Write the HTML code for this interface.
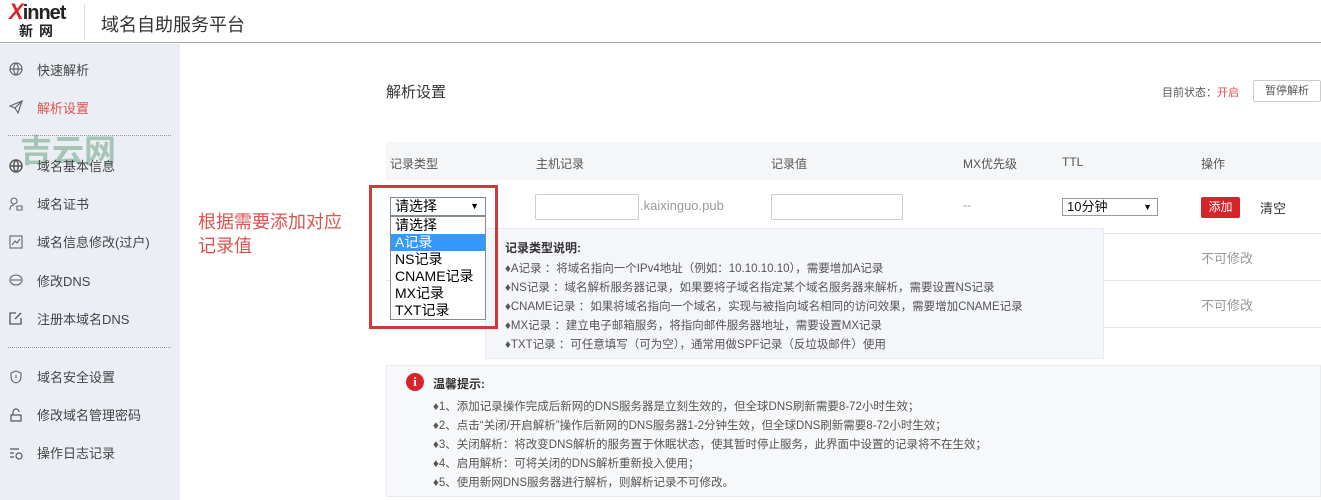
<!DOCTYPE html>
<html><head><meta charset="utf-8"><style>
*{margin:0;padding:0;box-sizing:border-box}
body{width:1321px;height:500px;overflow:hidden;background:#fff;font-family:"Liberation Sans","Noto Sans CJK SC",sans-serif;color:#333;position:relative}
.a{position:absolute;white-space:nowrap}
.side{position:absolute;left:0;top:44px;width:180px;height:456px;background:#eceef5}
.nav{position:absolute;left:37px;font-size:13px;color:#444}
.ic{position:absolute;left:9px;width:14px;height:14px}
.sep{position:absolute;left:8px;width:163px;border-top:1px dotted #999}
.th{font-size:12px;color:#555;top:155px}
.tip{font-size:11.5px;color:#555}
</style></head><body>
<div class="a" style="left:0;top:0;width:1321px;height:43px;border-bottom:1px solid #aaa;background:#fff"></div>
<div class="a" style="left:9px;top:-1px;font:bold 20px 'Liberation Sans',sans-serif;color:#222;letter-spacing:-1px"><span style="color:#d8262c;font-style:italic;font-size:22px">X</span>innet</div>
<div class="a" style="left:19px;top:21px;font-size:14px;font-weight:bold;color:#222;letter-spacing:6px">新网</div>
<div class="a" style="left:84px;top:4px;width:1px;height:36px;background:#ddd"></div>
<div class="a" style="left:101px;top:11px;font-size:18px;color:#333">域名自助服务平台</div>

<div class="side"></div>
<svg class="ic" style="top:62px" viewBox="0 0 14 14" fill="none" stroke="#666" stroke-width="1.2"><circle cx="7" cy="7" r="6"/><path d="M1 7h12M7 1c-3 3-3 9 0 12M7 1c3 3 3 9 0 12"/></svg>
<div class="nav" style="top:60px">快速解析</div>
<svg class="ic" style="top:100px" viewBox="0 0 14 14" fill="none" stroke="#666" stroke-width="1.2"><path d="M1 6l12-5-4 12-3-5z M6 8l7-7"/></svg>
<div class="nav" style="top:98px;color:#d9534f">解析设置</div>
<div class="sep" style="top:135px"></div>
<div class="a" style="left:20px;top:126px;font-size:32px;color:rgba(120,170,140,.6);font-weight:bold">吉云网</div>
<svg class="ic" style="top:159px" viewBox="0 0 14 14" fill="none" stroke="#555" stroke-width="1.4"><circle cx="7" cy="7" r="6"/><path d="M1 7h12M7 1c-3 3-3 9 0 12M7 1c3 3 3 9 0 12"/></svg>
<div class="nav" style="top:156px">域名基本信息</div>
<svg class="ic" style="top:197px" viewBox="0 0 14 14" fill="none" stroke="#666" stroke-width="1.1"><circle cx="5" cy="4" r="3"/><path d="M1 13c0-4 2-5 4-5M8 9h5v4H8z"/></svg>
<div class="nav" style="top:194px">域名证书</div>
<svg class="ic" style="top:235px" viewBox="0 0 14 14" fill="none" stroke="#666" stroke-width="1.1"><rect x="1" y="1" width="12" height="12"/><path d="M3 10l3-4 2 2 3-4"/></svg>
<div class="nav" style="top:232px">域名信息修改(过户)</div>
<svg class="ic" style="top:273px" viewBox="0 0 14 14" fill="none" stroke="#666" stroke-width="1.1"><ellipse cx="7" cy="7" rx="6" ry="5"/><path d="M2 7h10"/></svg>
<div class="nav" style="top:271px">修改DNS</div>
<svg class="ic" style="top:311px" viewBox="0 0 14 14" fill="none" stroke="#555" stroke-width="1.3"><path d="M12 7v6H1V2h6M6 8l6-6"/></svg>
<div class="nav" style="top:309px">注册本域名DNS</div>
<div class="sep" style="top:347px"></div>
<svg class="ic" style="top:370px" viewBox="0 0 14 14" fill="none" stroke="#666" stroke-width="1.1"><path d="M7 1l5 2v4c0 3-2 5-5 6-3-1-5-3-5-6V3z M7 5v3"/></svg>
<div class="nav" style="top:367px">域名安全设置</div>
<svg class="ic" style="top:408px" viewBox="0 0 14 14" fill="none" stroke="#555" stroke-width="1.2"><rect x="2" y="7" width="10" height="6"/><path d="M4 7V4a3 3 0 0 1 6 0"/></svg>
<div class="nav" style="top:405px">修改域名管理密码</div>
<svg class="ic" style="top:446px" viewBox="0 0 14 14" fill="none" stroke="#555" stroke-width="1.2"><path d="M1 3h9M1 7h4M1 11h4"/><circle cx="10" cy="10" r="3"/></svg>
<div class="nav" style="top:443px">操作日志记录</div>

<div class="a" style="left:386px;top:81px;font-size:15px;color:#333">解析设置</div>
<div class="a" style="left:1162px;top:84px;font-size:11px;color:#555">目前状态：<span style="color:#d9534f">开启</span></div>
<div class="a" style="left:1253px;top:80px;width:68px;height:22px;border:1px solid #ccc;font-size:11px;color:#555;text-align:center;line-height:20px;border-radius:2px">暂停解析</div>

<div class="a" style="left:386px;top:142px;width:935px;height:38px;background:#f5f6f8"></div>
<div class="a th" style="left:390px">记录类型</div>
<div class="a th" style="left:536px">主机记录</div>
<div class="a th" style="left:771px">记录值</div>
<div class="a th" style="left:963px">MX优先级</div>
<div class="a th" style="left:1062px">TTL</div>
<div class="a th" style="left:1201px">操作</div>
<div class="a" style="left:386px;top:233px;width:935px;border-top:1px solid #e6e6e6"></div>
<div class="a" style="left:386px;top:280px;width:935px;border-top:1px solid #e6e6e6"></div>
<div class="a" style="left:386px;top:327px;width:935px;border-top:1px solid #e6e6e6"></div>

<div class="a" style="left:535px;top:194px;width:104px;height:26px;border:1px solid #ccc;border-radius:2px"></div>
<div class="a" style="left:640px;top:198px;font-size:13px;color:#999">.kaixinguo.pub</div>
<div class="a" style="left:771px;top:194px;width:132px;height:26px;border:1px solid #ccc;border-radius:2px"></div>
<div class="a" style="left:963px;top:198px;font-size:12px;color:#999">--</div>
<div class="a" style="left:1062px;top:198px;width:96px;height:18px;border:1px solid #999;font-size:13px;line-height:16px;padding-left:4px;color:#111">10分钟<span style="position:absolute;right:5px;font-size:9px">▼</span></div>
<div class="a" style="left:1201px;top:197px;width:39px;height:21px;background:#d9232b;color:#fff;font-size:12px;text-align:center;line-height:21px;border-radius:2px">添加</div>
<div class="a" style="left:1260px;top:198px;font-size:13px;color:#333">清空</div>
<div class="a" style="left:1201px;top:248px;font-size:13px;color:#999">不可修改</div>
<div class="a" style="left:1201px;top:295px;font-size:13px;color:#999">不可修改</div>

<div class="a" style="left:485px;top:228px;width:619px;height:131px;background:#f4f6f9;border:1px solid #e8ebef"></div>
<div class="a" style="left:505px;top:239px;font-size:12px;font-weight:bold;color:#333">记录类型说明:</div>
<div class="a tip" style="left:505px;top:260px">♦A记录 ：将域名指向一个IPv4地址（例如：10.10.10.10），需要增加A记录</div>
<div class="a tip" style="left:505px;top:279px">♦NS记录 ：域名解析服务器记录，如果要将子域名指定某个域名服务器来解析，需要设置NS记录</div>
<div class="a tip" style="left:505px;top:298px">♦CNAME记录 ：如果将域名指向一个域名，实现与被指向域名相同的访问效果，需要增加CNAME记录</div>
<div class="a tip" style="left:505px;top:317px">♦MX记录 ：建立电子邮箱服务，将指向邮件服务器地址，需要设置MX记录</div>
<div class="a tip" style="left:505px;top:336px">♦TXT记录 ：可任意填写（可为空），通常用做SPF记录（反垃圾邮件）使用</div>

<div class="a" style="left:369px;top:185px;width:129px;height:144px;border:3px solid #d0393a"></div>
<div class="a" style="left:390px;top:197px;width:96px;height:19px;border:1px solid #7a8a99;background:#fff;font-size:14px;line-height:17px;padding-left:4px;color:#000">请选择<span style="position:absolute;right:6px;font-size:9px">▼</span></div>
<div class="a" style="left:390px;top:216px;width:96px;height:104px;border:1px solid #888;background:#fff;font-size:14px;line-height:17px;color:#000">
<div style="padding-left:4px">请选择</div>
<div style="padding-left:4px;background:#3399ff;color:#fff">A记录</div>
<div style="padding-left:4px">NS记录</div>
<div style="padding-left:4px">CNAME记录</div>
<div style="padding-left:4px">MX记录</div>
<div style="padding-left:4px">TXT记录</div>
</div>
<div class="a" style="left:198px;top:210px;font-size:18px;color:#d9534f;line-height:24px">根据需要添加对应<br>记录值</div>

<div class="a" style="left:386px;top:365px;width:935px;height:132px;background:#f7f8fa;border:1px solid #e8ebef"></div>
<div class="a" style="left:406px;top:373px;width:18px;height:18px;border-radius:50%;background:#d9232b;color:#fff;font-weight:bold;font-size:13px;text-align:center;line-height:18px;font-family:'Liberation Serif',serif">i</div>
<div class="a" style="left:433px;top:375px;font-size:12px;font-weight:bold;color:#333">温馨提示:</div>
<div class="a tip" style="left:433px;top:398px">♦1、添加记录操作完成后新网的DNS服务器是立刻生效的，但全球DNS刷新需要8-72小时生效；</div>
<div class="a tip" style="left:433px;top:417px">♦2、点击“关闭/开启解析”操作后新网的DNS服务器1-2分钟生效，但全球DNS刷新需要8-72小时生效；</div>
<div class="a tip" style="left:433px;top:436px">♦3、关闭解析：将改变DNS解析的服务置于休眠状态，使其暂时停止服务，此界面中设置的记录将不在生效；</div>
<div class="a tip" style="left:433px;top:455px">♦4、启用解析：可将关闭的DNS解析重新投入使用；</div>
<div class="a tip" style="left:433px;top:474px">♦5、使用新网DNS服务器进行解析，则解析记录不可修改。</div>
</body></html>
